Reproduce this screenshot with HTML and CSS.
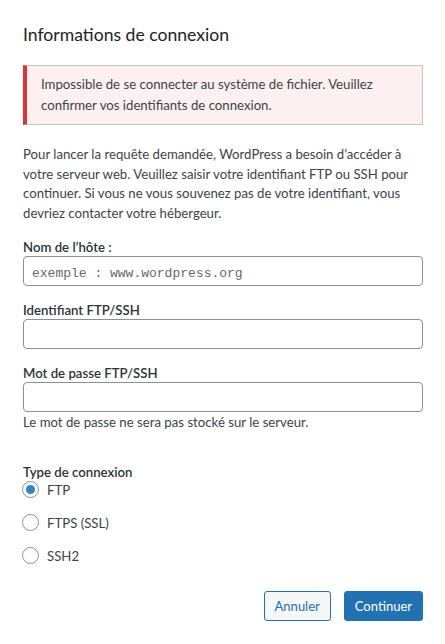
FILE: index.html
```html
<!DOCTYPE html>
<html lang="fr">
<head>
<meta charset="utf-8">
<title>Informations de connexion</title>
<link rel="stylesheet" href="styles.css">
</head>
<body>
<form class="dialog">
  <h2 class="title">Informations de connexion</h2>
  <div class="notice">
    <p>Impossible de se connecter au système de fichier. Veuillez confirmer vos identifiants de connexion.</p>
  </div>
  <p class="intro">Pour lancer la requête demandée, WordPress a besoin d’accéder à votre serveur web. Veuillez saisir votre identifiant FTP ou SSH pour continuer. Si vous ne vous souvenez pas de votre identifiant, vous devriez contacter votre hébergeur.</p>

  <label class="field-label" for="hostname">Nom de l’hôte :</label>
  <input class="text-input" id="hostname" type="text" placeholder="exemple : www.wordpress.org">

  <label class="field-label" for="username">Identifiant FTP/SSH</label>
  <input class="text-input" id="username" type="text">

  <label class="field-label" for="password">Mot de passe FTP/SSH</label>
  <input class="text-input" id="password" type="password">
  <p class="help">Le mot de passe ne sera pas stocké sur le serveur.</p>

  <fieldset class="conn-type">
    <legend class="field-label legend">Type de connexion</legend>
    <label class="radio-row"><input class="radio" type="radio" name="type" checked> FTP</label>
    <label class="radio-row"><input class="radio" type="radio" name="type"> FTPS (SSL)</label>
    <label class="radio-row"><input class="radio" type="radio" name="type"> SSH2</label>
  </fieldset>

  <div class="actions">
    <button type="button" class="btn btn-secondary">Annuler</button>
    <button type="button" class="btn btn-primary">Continuer</button>
  </div>
</form>
</body>
</html>
```
FILE: styles.css
```css
html, body {
  margin: 0;
  padding: 0;
  background: #ffffff;
}

body {
  font-family: Lato, "Noto Sans", sans-serif;
  font-size: 13.2px;
  color: #3c434a;
}

.dialog {
  width: 400px;
  margin: 0 0 0 23px;
  padding-top: 23px;
  display: flex;
  flex-direction: column;
}

.title {
  margin: 0;
  font-size: 17.6px;
  line-height: 24px;
  font-weight: 400;
  color: #1d2327;
}

.notice {
  margin-top: 18px;
  background: #fcf0f1;
  border: 1px solid #c3c4c7;
  border-left: 4px solid #d63638;
  padding: 8px 12px 8px 14px;
}

.notice p {
  margin: 0;
  line-height: 21px;
}

.intro {
  margin: 20px 0 0;
  line-height: 19.5px;
}

.field-label {
  display: block;
  margin-top: 15px;
  line-height: 18px;
  font-weight: 600;
  color: #2c3338;
}

.text-input {
  box-sizing: border-box;
  width: 400px;
  height: 30px;
  margin: 0;
  padding: 0 8px;
  border: 1px solid #8c8f94;
  border-radius: 4px;
  background: #fff;
  font-family: Lato, sans-serif;
  font-size: 14px;
  color: #2c3338;
}

#hostname::placeholder {
  font-family: "Liberation Mono", "DejaVu Sans Mono", monospace;
  font-size: 13px;
  color: #646970;
}

.help {
  margin: 1px 0 0;
  line-height: 19.5px;
}

.conn-type {
  border: 0;
  margin: 30px 0 0;
  padding: 0;
  display: flex;
  flex-direction: column;
  gap: 15px;
}

.legend {
  padding: 0;
  margin: 0;
}

.radio-row {
  display: flex;
  align-items: center;
  gap: 8px;
  height: 18px;
  line-height: 18px;
  margin-left: -1px;
}

.radio {
  appearance: none;
  -webkit-appearance: none;
  box-sizing: border-box;
  width: 17px;
  height: 17px;
  margin: 0;
  border: 1px solid #8c8f94;
  border-radius: 50%;
  background: #fff;
  display: grid;
  place-items: center;
}

.radio:checked::before {
  content: "";
  width: 9px;
  height: 9px;
  border-radius: 50%;
  background: #3582c4;
}

.actions {
  margin-top: 26px;
  display: flex;
  justify-content: flex-end;
  gap: 13px;
}

.btn {
  box-sizing: border-box;
  height: 30px;
  padding: 0 10px;
  border-radius: 3px;
  font-family: Lato, sans-serif;
  font-size: 13px;
  line-height: 28px;
  cursor: pointer;
}

.btn-secondary {
  border: 1px solid #2271b1;
  background: #f6f7f7;
  color: #2271b1;
}

.btn-primary {
  border: 1px solid #2271b1;
  background: #2271b1;
  color: #fff;
}
```
